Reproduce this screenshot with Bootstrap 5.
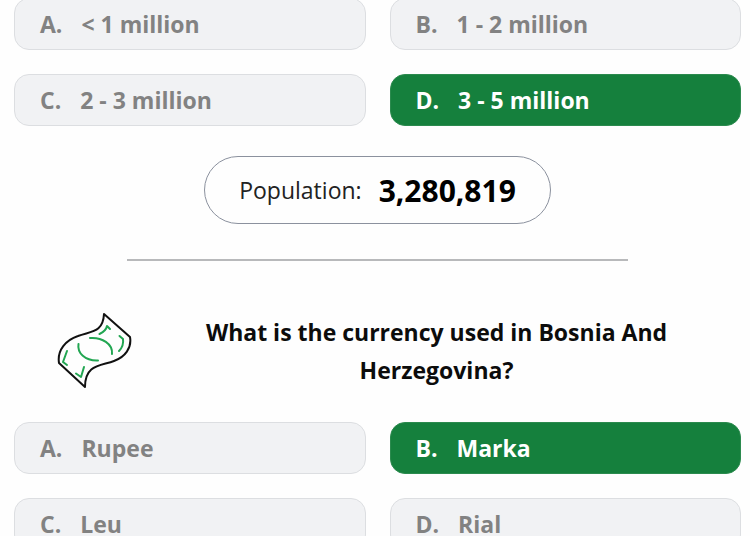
<!DOCTYPE html>
<html lang="en">
<head>
<meta charset="utf-8">
<meta name="viewport" content="width=device-width, initial-scale=1">
<title>Country quiz</title>
<link href="https://cdn.jsdelivr.net/npm/bootstrap@5.3.0/dist/css/bootstrap.min.css" rel="stylesheet">
<style>
  body { font-family: "Open Sans", "Noto Sans", sans-serif; color: #0c0c0c; background: #fefefe; }
  .quiz { padding: 0 9px 0 14px; margin-top: -2px; }
  .answers { display: grid; grid-template-columns: 1fr 1fr; gap: 24px; }
  .answer { --bs-btn-padding-x: 25px; --bs-btn-padding-y: 7px; --bs-btn-border-radius: 15px;
    --bs-btn-font-size: 23px; --bs-btn-font-weight: 700; --bs-btn-line-height: 36px;
    --bs-btn-color: #828282; --bs-btn-bg: #f1f2f4; --bs-btn-border-color: #dcdee1;
    --bs-btn-hover-color: #666; --bs-btn-hover-bg: #e8eaed; --bs-btn-hover-border-color: #d0d3d7; }
  .answer.correct { --bs-btn-color: #fff; --bs-btn-bg: #15803d; --bs-btn-border-color: #2b8a4e;
    --bs-btn-hover-color: #fff; --bs-btn-hover-bg: #126c34; --bs-btn-hover-border-color: #126c34; }
  .answer .letter { margin-right: 19px; }
  .fact { margin-top: 30px; padding: 0 34px; height: 68px; border: 1px solid #8b919e; gap: 17px; font-size: 23px; color: #222; }
  .fact strong { font-size: 30px; color: #000; }
  .divider { width: 69%; margin: 35px auto 0; border-top: 2px solid #b8b9bb; opacity: 1; }
  .question { padding: 51px 0 33px 42px; }
  .question svg { width: 76px; height: 77px; }
  .question h2 { font-size: 23px; line-height: 38px; font-weight: 700; padding: 0 64px; }
</style>
<script src="https://cdn.jsdelivr.net/npm/bootstrap@5.3.0/dist/js/bootstrap.bundle.min.js" defer></script>
</head>
<body>
<div class="vh-100 overflow-hidden">
<main class="quiz">
  <div class="answers">
    <button type="button" class="btn answer text-start"><span class="letter">A.</span>&lt; 1 million</button>
    <button type="button" class="btn answer text-start"><span class="letter">B.</span>1 - 2 million</button>
    <button type="button" class="btn answer text-start"><span class="letter">C.</span>2 - 3 million</button>
    <button type="button" class="btn answer correct text-start"><span class="letter">D.</span>3 - 5 million</button>
  </div>
  <div class="d-flex justify-content-center">
    <div class="fact rounded-pill d-flex align-items-center"><span>Population:</span><strong>3,280,819</strong></div>
  </div>
  <hr class="divider">
  <div class="question d-flex align-items-center">
    <svg class="flex-shrink-0" viewBox="56 312 76 77" fill="none" stroke-width="2" stroke-linecap="round" stroke-linejoin="round" aria-hidden="true">
      <path stroke="#111" d="M104 314 L130 337 C132 348 125 357 114 361 C101 366 85 364 85 387 L59 363 C57 350 66 340 78 336 C91 331 103 333 104 314 Z"/>
      <path stroke="#22a652" d="M78.500 344 C77 353 85 361 98 360.500 M90 338 C102 337 113 344 112 354 M110 329 L107 326 Q106 331 99.500 334 M119.500 336 L123 339 Q124 346 119 351 M67 351 L63 362 L67 365 M76 373.500 L81 377 L84 367"/>
    </svg>
    <h2 class="flex-grow-1 text-center mb-0">What is the currency used in Bosnia And Herzegovina?</h2>
  </div>
  <div class="answers">
    <button type="button" class="btn answer text-start"><span class="letter">A.</span>Rupee</button>
    <button type="button" class="btn answer correct text-start"><span class="letter">B.</span>Marka</button>
    <button type="button" class="btn answer text-start"><span class="letter">C.</span>Leu</button>
    <button type="button" class="btn answer text-start"><span class="letter">D.</span>Rial</button>
  </div>
</main>
</div>
</body>
</html>
